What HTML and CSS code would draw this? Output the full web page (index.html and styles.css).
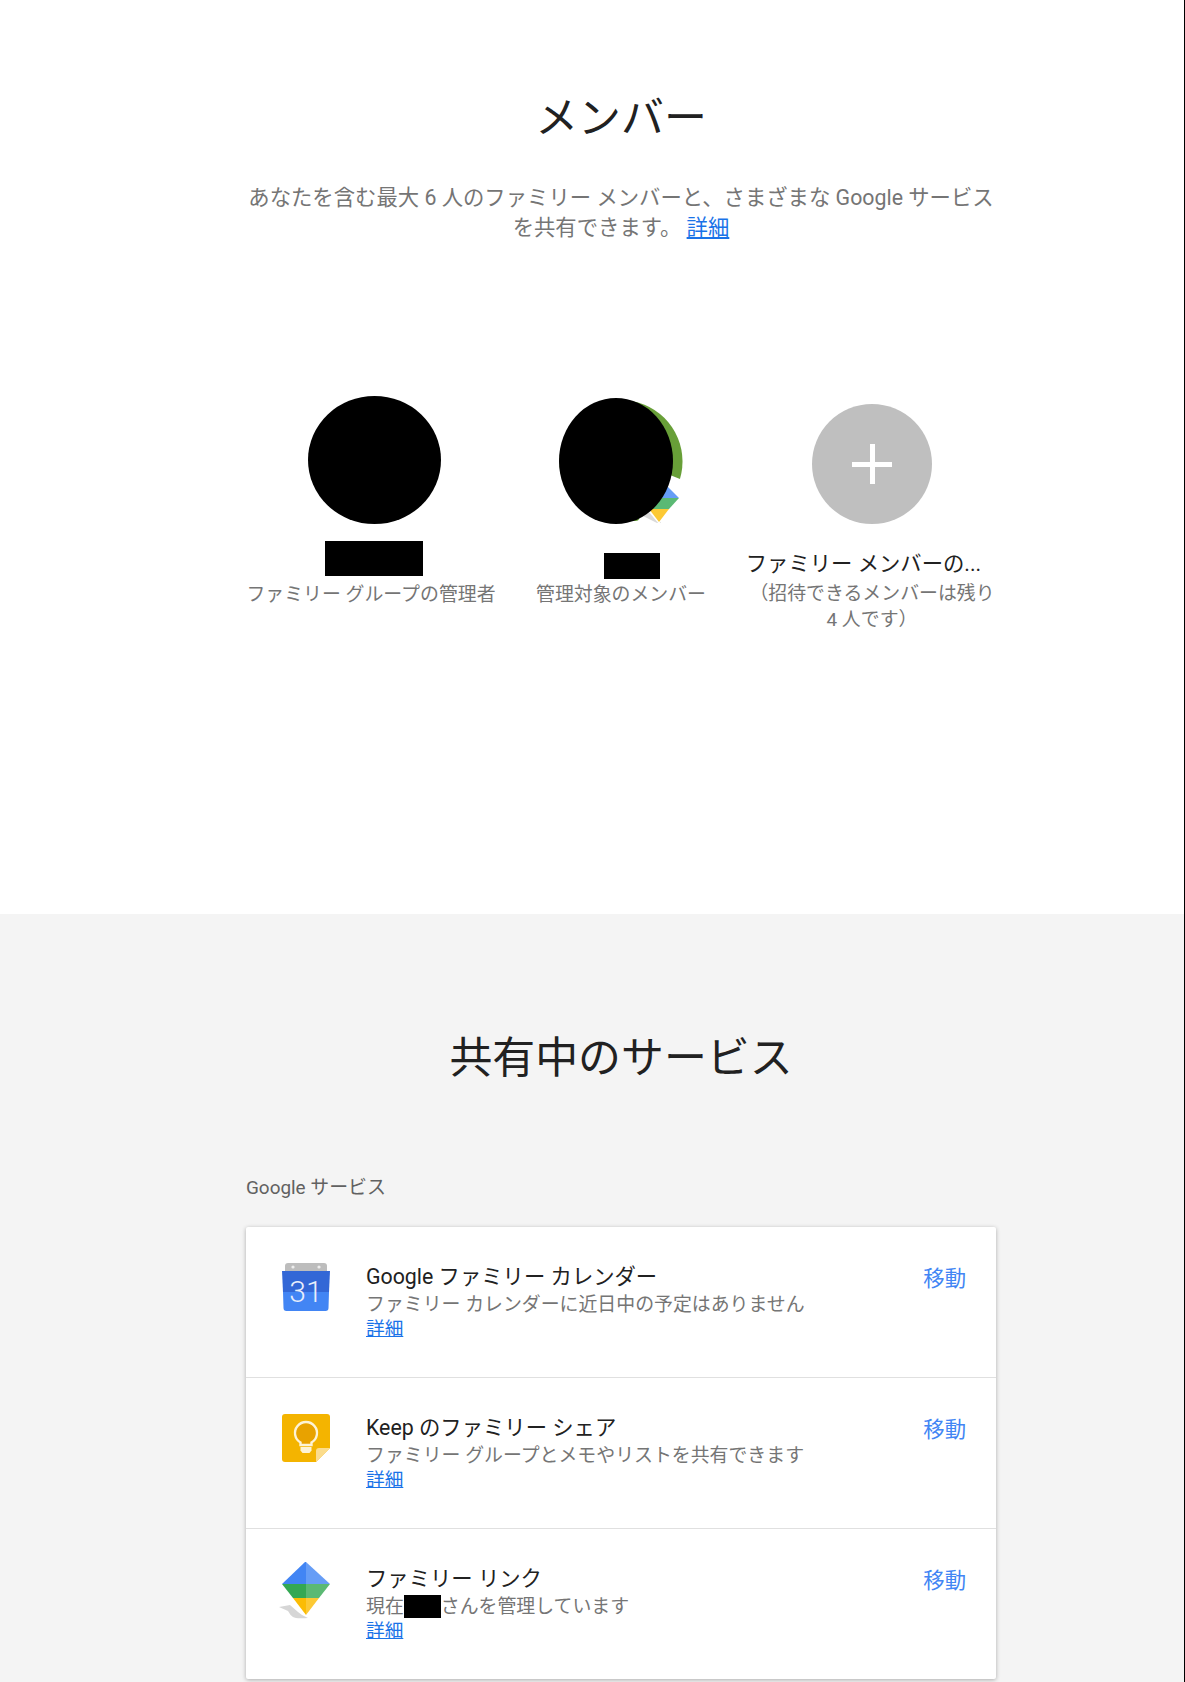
FILE: index.html
```html
<!DOCTYPE html>
<html lang="ja">
<head>
    <meta charset="UTF-8">
    <title>ファミリー</title>
    <link rel="stylesheet" href="styles.css">
</head>
<body>

    <!-- Members -->
    <section class="members">
        <div class="content">
            <h1 class="title">メンバー</h1>
            <p class="intro">あなたを含む最大 6 人のファミリー メンバーと、さまざまな Google サービスを共有できます。 <a href="#">詳細</a></p>

            <div class="member-list">
                <div class="member">
                    <div class="avatar-slot">
                        <div class="avatar-black"></div>
                    </div>
                    <div class="name-block name-admin"></div>
                    <div class="member-role">ファミリー グループの管理者</div>
                </div>

                <div class="member">
                    <div class="avatar-slot">
                        <svg class="avatar-child" width="130" height="128" viewBox="0 0 130 128">
                            <circle cx="62" cy="63.500" r="61.500" fill="#689f38"/>
                            <path d="M111 77l10 4h10v48H60v-6h19l10-20z" fill="#fff"/>
                            <path d="M84 118l14 7h4l-2-8-12-4z" fill="#d9d9d9"/>
                            <path d="M78 100l22-22 22 22-22 26z" fill="#fff"/>
                            <path d="M80 100l20-20 20 20z" fill="#669df6"/>
                            <path d="M80 100h40l-10 11H90z" fill="#5bb974"/>
                            <path d="M90 111h20l-10 13z" fill="#fcc934"/>
                            <ellipse cx="57" cy="63" rx="57" ry="63" fill="#000"/>
                        </svg>
                    </div>
                    <div class="name-block name-child"></div>
                    <div class="member-role">管理対象のメンバー</div>
                </div>

                <div class="member">
                    <div class="avatar-slot">
                        <div class="avatar-add"><span class="plus"></span></div>
                    </div>
                    <div class="member-invite">ファミリー メンバーの...</div>
                    <div class="member-role">（招待できるメンバーは残り<br>4 人です）</div>
                </div>
            </div>
        </div>
    </section>

    <!-- Services -->
    <section class="services">
        <div class="content">
            <h1 class="title">共有中のサービス</h1>
            <div class="group-label">Google サービス</div>

            <div class="card">
                <div class="service">
                    <svg class="service-icon" width="48" height="48" viewBox="0 0 48 48">
                        <path d="M3 3a3 3 0 0 1 3-3h36a3 3 0 0 1 3 3v6H3z" fill="#bdbdbd"/>
                        <circle cx="11" cy="4" r="1.6" fill="#eee"/>
                        <circle cx="37" cy="4" r="1.6" fill="#eee"/>
                        <path d="M0 8h48l-1 21H1z" fill="#3367d6"/>
                        <path d="M1 29h46l-.5 16a3 3 0 0 1-3 3H4.500a3 3 0 0 1-3-3z" fill="#4285f4"/>
                        <text x="24" y="39" class="cal-day">31</text>
                    </svg>
                    <div class="service-text">
                        <div class="service-name">Google ファミリー カレンダー</div>
                        <div class="service-desc">ファミリー カレンダーに近日中の予定はありません</div>
                        <a class="service-more" href="#">詳細</a>
                    </div>
                    <a class="service-go" href="#">移動</a>
                </div>

                <div class="service">
                    <svg class="service-icon" width="48" height="48" viewBox="0 0 48 48">
                        <path d="M3 0h42a3 3 0 0 1 3 3v31L34 48H3a3 3 0 0 1-3-3V3a3 3 0 0 1 3-3z" fill="#f4b400"/>
                        <path d="M48 34H37a3 3 0 0 0-3 3v11z" fill="#fbdc8c"/>
                        <path d="M18.500 31v-2.500a11 11 0 1 1 11 0v2.500z" fill="#e8a200" stroke="#fdf3d6" stroke-width="2.400"/>
                        <path d="M18.500 33h11v3.500l-2 2.500h-7l-2-2.500z" fill="#fdf3d6"/>
                    </svg>
                    <div class="service-text">
                        <div class="service-name">Keep のファミリー シェア</div>
                        <div class="service-desc">ファミリー グループとメモやリストを共有できます</div>
                        <a class="service-more" href="#">詳細</a>
                    </div>
                    <a class="service-go" href="#">移動</a>
                </div>

                <div class="service">
                    <svg class="service-icon icon-link" width="48" height="56" viewBox="0 0 48 56">
                        <path d="M-3 45l11-2 8 7 4 3 6 3q-12 1-15-1t-5-6z" fill="#d6d6d6"/>
                        <path d="M0 22 23 0h1v22z" fill="#4285f4"/>
                        <path d="M24 0l24 22H24z" fill="#669df6"/>
                        <path d="M0 22h24v14H11z" fill="#34a853"/>
                        <path d="M24 22h24L37 36H24z" fill="#5bb974"/>
                        <path d="M11 36h13v17z" fill="#fbbc04"/>
                        <path d="M24 36h13L24 53z" fill="#fcc934"/>
                    </svg>
                    <div class="service-text">
                        <div class="service-name">ファミリー リンク</div>
                        <div class="service-desc">現在<span class="name-inline"></span>さんを管理しています</div>
                        <a class="service-more" href="#">詳細</a>
                    </div>
                    <a class="service-go" href="#">移動</a>
                </div>
            </div>
        </div>
    </section>

</body>
</html>
```

FILE: styles.css
```css
html,
body {
    margin: 0;
    padding: 0;
}

body {
    font-family: Roboto, "Noto Sans CJK JP", sans-serif;
    background: #fff;
    color: #212121;
    height: 1682px;
    overflow: hidden;
    box-sizing: border-box;
    border-right: 1px solid #000;
}

.content {
    width: 750px;
    margin-left: 246px;
}

/* Members */
.members {
    height: 914px;
    background: #fff;
    padding-top: 90px;
    box-sizing: border-box;
}

.title {
    margin: 0;
    font-size: 42.9px;
    font-weight: 400;
    line-height: 56px;
    text-align: center;
    color: #212121;
}

.intro {
    margin: 37px 0 0;
    font-size: 21.35px;
    line-height: 30px;
    text-align: center;
    color: #757575;
}

.intro a,
.service-more {
    color: #1a73e8;
}

.member-list {
    display: grid;
    grid-template-columns: repeat(3, 250px);
    margin-top: 153px;
}

.member {
    display: flex;
    flex-direction: column;
    align-items: center;
    text-align: center;
}

.avatar-slot {
    position: relative;
    height: 128px;
    width: 100%;
    display: flex;
    justify-content: center;
}

.avatar-black {
    width: 133px;
    height: 128px;
    border-radius: 50%;
    background: #000;
    margin-left: 6px;
}

.avatar-child {
    margin: 2px 0 0 6px;
    overflow: visible;
}

.avatar-add {
    width: 120px;
    height: 120px;
    margin: 8px 0 0 2px;
    border-radius: 50%;
    background: #bfbfbf;
    position: relative;
}

.plus {
    position: absolute;
    left: 40px;
    top: 40px;
    width: 40px;
    height: 40px;
    background:
        linear-gradient(#fff, #fff) center / 40px 5px no-repeat,
        linear-gradient(#fff, #fff) center / 5px 40px no-repeat;
}

.name-block {
    background: #000;
}

.name-admin {
    width: 98px;
    height: 35px;
    margin: 17px 0 1px 6px;
}

.name-child {
    width: 56px;
    height: 26px;
    margin: 29px 0 -2px 22px;
}

.member-role {
    font-size: 18.9px;
    line-height: 25.6px;
    color: #757575;
    margin-top: 5px;
    white-space: nowrap;
}

.member-invite {
    font-size: 21.33px;
    line-height: 28px;
    margin-top: 26px;
    margin-right: 15px;
    white-space: nowrap;
}

.member-invite + .member-role {
    margin-top: 3px;
    padding-left: 2px;
}

/* Services */
.services {
    height: 768px;
    background: #f4f4f4;
    padding-top: 116px;
    box-sizing: border-box;
}

.group-label {
    margin-top: 88px;
    font-size: 18.9px;
    line-height: 28px;
    color: #616161;
}

.card {
    margin-top: 25px;
    background: #fff;
    border-radius: 2px;
    box-shadow: 0 1px 4px rgba(0, 0, 0, 0.3);
}

.service {
    display: flex;
    align-items: flex-start;
    height: 151px;
    padding: 36px 30px 0 36px;
    box-sizing: border-box;
    border-bottom: 1px solid #e0e0e0;
}

.service:last-child {
    height: 150px;
    border-bottom: none;
}

.service-icon {
    flex: none;
    overflow: visible;
}

.icon-link {
    margin-top: -3px;
}

.service-text {
    flex: 1;
    margin-left: 36px;
}

.service-name {
    font-size: 21.33px;
    line-height: 28px;
}

.service-desc {
    font-size: 18.9px;
    line-height: 28px;
    color: #757575;
}

.service-more {
    display: block;
    font-size: 18.67px;
    line-height: 20px;
}

.service-go {
    font-size: 21.33px;
    line-height: 26px;
    margin-top: 3px;
    color: #4285f4;
    text-decoration: none;
}

.name-inline {
    display: inline-block;
    width: 37px;
    height: 23px;
    background: #000;
    vertical-align: -5px;
}

.cal-day {
    font-family: Roboto, sans-serif;
    font-size: 30px;
    font-weight: 300;
    fill: #e8eefb;
    text-anchor: middle;
}
```
